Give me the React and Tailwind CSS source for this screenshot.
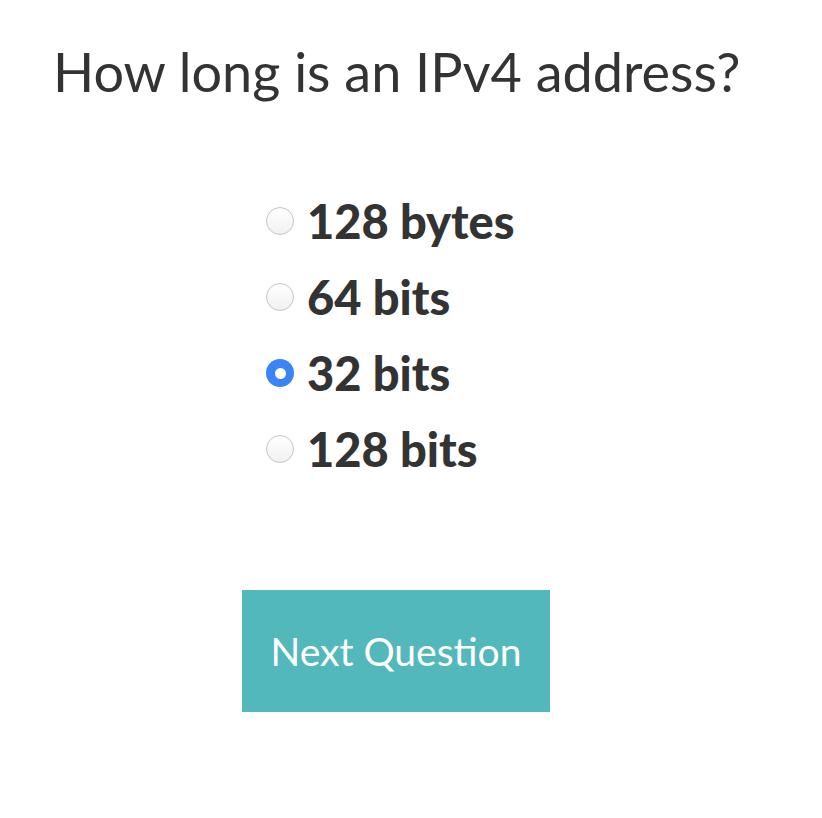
import React from "react";

const options = [
  { label: "128 bytes", checked: false },
  { label: "64 bits", checked: false },
  { label: "32 bits", checked: true },
  { label: "128 bits", checked: false },
];

function Radio({ checked }) {
  if (checked) {
    return (
      <div className="w-[28px] h-[28px] rounded-full bg-[#3b84f6] flex items-center justify-center shrink-0">
        <div className="w-[11px] h-[11px] rounded-full bg-white" />
      </div>
    );
  }
  return (
    <div className="w-[28px] h-[28px] rounded-full border border-[#c4c4c4] bg-gradient-to-b from-white to-[#f1f1f1] shrink-0" />
  );
}

export default function App() {
  return (
    <div
      className="w-[822px] h-[818px] bg-white text-[#333333]"
      style={{ fontFamily: "Lato, 'Noto Sans', sans-serif" }}
    >
      <h1 className="pl-[53px] pt-[36px] text-[54px] leading-[72px] font-normal">
        How long is an IPv4 address?
      </h1>
      <div className="mt-[75px] ml-[266px] flex flex-col">
        {options.map((o) => (
          <div key={o.label} className="h-[76px] flex items-center gap-[13px]">
            <Radio checked={o.checked} />
            <span className="text-[47px] font-black leading-none">{o.label}</span>
          </div>
        ))}
      </div>
      <button className="mt-[103px] ml-[242px] w-[308px] h-[122px] bg-[#52b8bb] text-white text-[39px] font-normal flex items-center justify-center">
        Next Question
      </button>
    </div>
  );
}
